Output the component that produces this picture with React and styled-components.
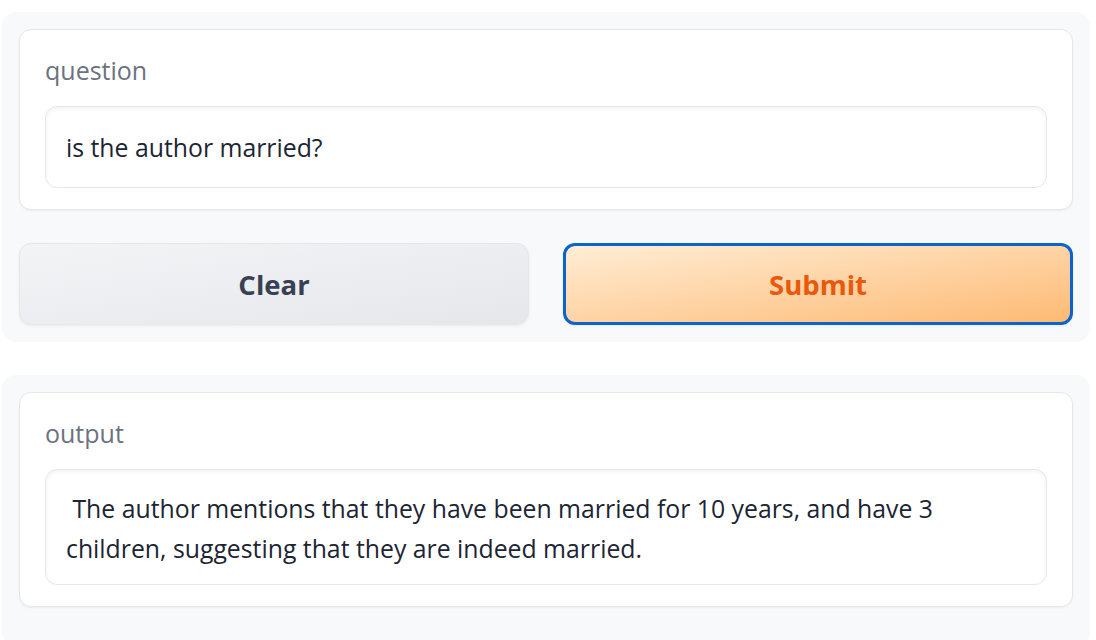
import React from "react";
import styled, { createGlobalStyle } from "styled-components";

const GlobalStyle = createGlobalStyle`
  html, body { margin: 0; padding: 0; background: #ffffff; }
  body { font-family: "Open Sans", "Noto Sans", sans-serif; -webkit-font-smoothing: antialiased; }
  * { box-sizing: border-box; }
`;

const Page = styled.div`
  display: flex;
  flex-direction: column;
  gap: 33px;
  padding: 12px 6px 0 2px;
`;

const Panel = styled.div`
  background: #f8f9fb;
  border-radius: 14px;
  padding: 17px 17px ${(p) => p.$bottom || 17}px;
  display: flex;
  flex-direction: column;
  gap: 33px;
`;

const Card = styled.div`
  background: #ffffff;
  border: 1px solid #e5e7eb;
  border-radius: 12px;
  box-shadow: 0 1px 2px rgba(0, 0, 0, 0.05);
  padding: 23px 25px 21px;
`;

const Label = styled.div`
  font-size: 25px;
  line-height: 34px;
  color: #6b7280;
  margin-bottom: 19px;
`;

const Field = styled.div`
  border: 1px solid #e5e7eb;
  border-radius: 12px;
  background: #ffffff;
  box-shadow: inset 0 2px 4px rgba(0, 0, 0, 0.05);
  padding: ${(p) => (p.$multi ? "18px 20px 16px" : "20px 20px")};
  font-size: 24.8px;
  line-height: 40px;
  color: #1c2533;
  white-space: pre-wrap;
`;

const ButtonRow = styled.div`
  display: grid;
  grid-template-columns: 1fr 1fr;
  gap: 34px;
`;

const Button = styled.button`
  height: 82px;
  border-radius: 12px;
  font-family: "Open Sans", "Noto Sans", sans-serif;
  font-weight: 700;
  font-size: 27.5px;
  cursor: pointer;
  border: ${(p) => (p.$primary ? "3px solid #0b63cc" : "1px solid #e5e7eb")};
  color: ${(p) => (p.$primary ? "#ea580c" : "#374151")};
  background: ${(p) =>
    p.$primary
      ? "linear-gradient(to bottom right, #ffedd5, #fdba74)"
      : "linear-gradient(to bottom right, #f3f4f6, #e5e7eb)"};
  box-shadow: 0 1px 3px rgba(0, 0, 0, 0.06);
`;

export default function App() {
  return (
    <>
      <GlobalStyle />
      <Page>
        <Panel>
          <Card>
            <Label>question</Label>
            <Field>is the author married?</Field>
          </Card>
          <ButtonRow>
            <Button>Clear</Button>
            <Button $primary>Submit</Button>
          </ButtonRow>
        </Panel>
        <Panel $bottom={40}>
          <Card>
            <Label>output</Label>
            <Field $multi>
              {" The author mentions that they have been married for 10 years, and have 3 children, suggesting that they are indeed married."}
            </Field>
          </Card>
        </Panel>
      </Page>
    </>
  );
}
